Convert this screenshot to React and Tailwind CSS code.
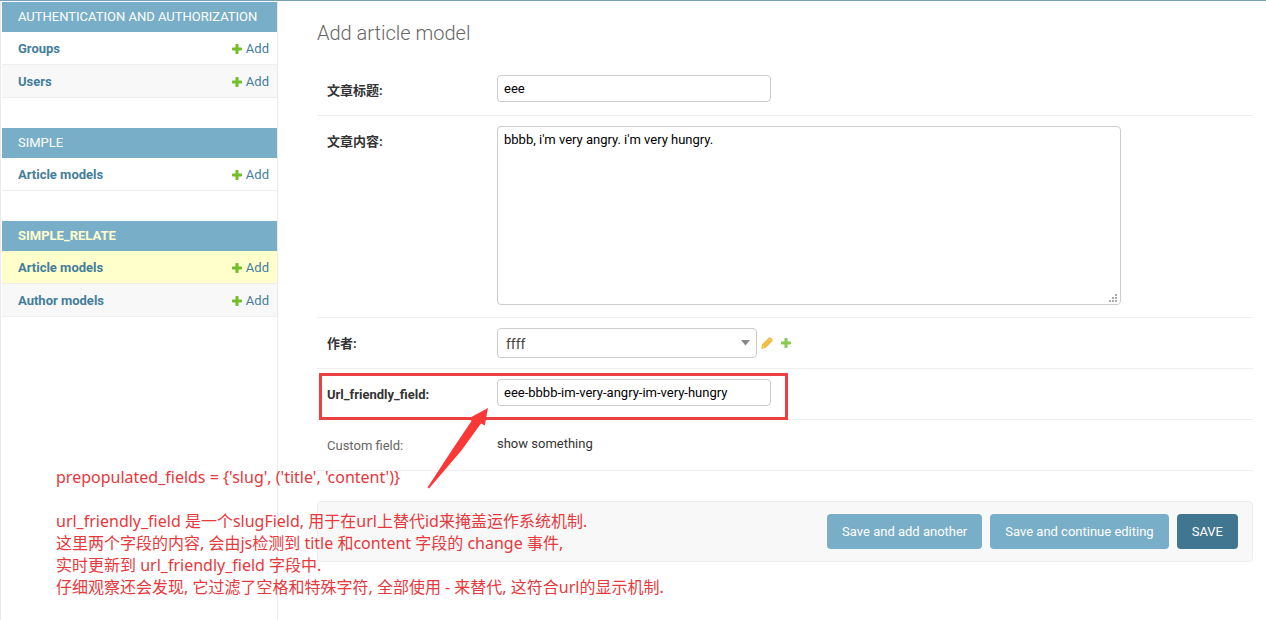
const apps = [
  {
    name: 'AUTHENTICATION AND AUTHORIZATION',
    models: ['Groups', 'Users'],
  },
  { name: 'SIMPLE', models: ['Article models'] },
  {
    name: 'SIMPLE_RELATE',
    current: true,
    models: ['Article models', 'Author models'],
  },
];

const notes = [
  "prepopulated_fields = {'slug', ('title', 'content')}",
  '',
  'url_friendly_field 是一个slugField, 用于在url上替代id来掩盖运作系统机制.',
  '这里两个字段的内容, 会由js检测到 title 和content 字段的 change 事件,',
  '实时更新到 url_friendly_field 字段中.',
  '仔细观察还会发现, 它过滤了空格和特殊字符, 全部使用 - 来替代, 这符合url的显示机制.',
];

function PlusIcon({ className }) {
  return (
    <svg viewBox="0 0 11 11" className={`size-[10px] shrink-0 ${className}`} aria-hidden="true">
      <path
        fill="currentColor"
        d="M4.600 0h1.800q.8 0 .8.800V3.800H10.200q.8 0 .8.800v1.800q0 .8-.8.800H7.200v3q0 .8-.8.800H4.600q-.8 0-.8-.8V7.200H.8Q0 7.200 0 6.400V4.600q0-.8.8-.8h3V.8q0-.8.8-.8z"
      />
    </svg>
  );
}

function PencilIcon() {
  return (
    <svg viewBox="0 0 12 12" className="size-3 shrink-0 text-[#f0bd45]" aria-hidden="true">
      <path
        fill="currentColor"
        fillRule="evenodd"
        d="M7.600 .8q1.200-1.100 2.300 0l1.300 1.300q1.100 1.100 0 2.300L4.700 10.900.9 11.800q-.9 0-.7-.9L1.100 7.300zM2.200 8.900l-.4 1.300 1.300-.4zM8.700 2.200l-.5.5 1.100 1.100.5-.5z"
      />
    </svg>
  );
}

function Sidebar() {
  return (
    <nav className="w-[278px] shrink-0 border-x border-[#eaeaea] pl-px pt-px" aria-label="Applications">
      {apps.map((app) => (
        <section key={app.name} className="mb-[30px]">
          <h2 className="bg-[#79aec8] px-4 text-[13px] leading-[30px]">
            <a
              href="#"
              className={app.current ? 'font-bold text-[#ffffcc]' : 'font-normal text-white'}
            >
              {app.name}
            </a>
          </h2>
          <ul>
            {app.models.map((model, i) => (
              <li
                key={model}
                className={`flex h-[33px] items-center justify-between border-b border-[#eee] pl-4 pr-2 pt-[2px] text-[13px] leading-[18px] text-[#447e9b] ${
                  app.current && i === 0 ? 'bg-[#ffffcc]' : i % 2 ? 'bg-[#f8f8f8]' : 'bg-white'
                }`}
              >
                <a href="#" className="font-bold">
                  {model}
                </a>
                <a href="#" className="flex items-center gap-1">
                  <PlusIcon className="text-[#70bf2b]" />
                  Add
                </a>
              </li>
            ))}
          </ul>
        </section>
      ))}
    </nav>
  );
}

function Row({ id, label, children, className = '' }) {
  return (
    <div className={`flex min-h-[51px] items-start border-b border-[#eee] p-[10px] ${className}`}>
      <label htmlFor={id} className="w-[170px] shrink-0 pt-2 font-bold leading-4">
        {label}
      </label>
      {children}
    </div>
  );
}

const field = 'block rounded border border-[#ccc] bg-white px-[6px] text-[13px] text-black outline-none';

export default function App() {
  return (
    <div className="relative flex min-h-screen flex-col overflow-x-hidden border-t border-[#79a0b8] bg-white font-['Roboto','Noto_Sans_CJK_SC',sans-serif] text-[13px] text-[#333]">
      <div className="flex flex-1">
        <Sidebar />
        <main className="min-w-0 flex-1 pb-5 pl-[39px] pr-[13px] pt-5">
          <h1 className="mb-5 text-xl font-light leading-6 text-[#666]">Add article model</h1>
          <form onSubmit={(e) => e.preventDefault()}>
            <Row id="title" label="文章标题:">
              <input id="title" defaultValue="eee" className={`${field} h-[27px] w-[274px]`} />
            </Row>
            <Row id="content" label="文章内容:">
              <div className="relative mb-[2px] w-full max-w-[624px]">
                <textarea
                  id="content"
                  defaultValue="bbbb, i'm very angry. i'm very hungry."
                  className={`${field} h-[179px] w-full resize-none py-[5px] leading-4`}
                />
                <svg viewBox="0 0 8 8" className="absolute bottom-[3px] right-1 size-2 text-[#aaa]" aria-hidden="true">
                  <path fill="currentColor" d="M0 6h2v2H0zM3 6h2v2H3zM6 6h2v2H6zM3 3h2v2H3zM6 3h2v2H6zM6 0h2v2H6z" />
                </svg>
              </div>
            </Row>
            <Row id="author" label="作者:">
              <div className="flex items-center">
                <div className="relative">
                  <select
                    id="author"
                    defaultValue="ffff"
                    className="block h-[30px] w-[260px] appearance-none rounded border border-[#ccc] bg-white px-2 pt-[2px] text-sm text-[#444] outline-none"
                  >
                    <option>ffff</option>
                  </select>
                  <svg viewBox="0 0 9 6" className="pointer-events-none absolute right-[7px] top-3 h-[6px] w-[9px]" aria-hidden="true">
                    <path fill="#888" d="M0 0h9L4.500 5.500z" />
                  </svg>
                </div>
                <button type="button" aria-label="Change author" className="ml-1">
                  <PencilIcon />
                </button>
                <button type="button" aria-label="Add author" className="ml-2">
                  <PlusIcon className="text-[#8bc951]" />
                </button>
              </div>
            </Row>
            <Row id="slug" label="Url_friendly_field:" className="relative">
              <input
                id="slug"
                defaultValue="eee-bbbb-im-very-angry-im-very-hungry"
                className={`${field} h-[27px] w-[274px]`}
              />
              <div className="pointer-events-none absolute left-[2px] top-1 h-[47px] w-[469px] border-[3px] border-[#ec3f42]" />
              <svg viewBox="0 0 64 84" className="pointer-events-none absolute left-[109px] top-[37px] z-10 h-[84px] w-16" aria-hidden="true">
                <path fill="#fa3838" d="M62 2 58.800 19.500 55 17.500 35 45 3 82.500 1.500 81.500 26 44 45.500 15 43.500 12z" />
              </svg>
            </Row>
            <div className="flex min-h-[51px] items-start border-b border-[#eee] p-[10px]">
              <span className="w-[170px] shrink-0 pt-2 leading-4 text-[#666]">Custom field:</span>
              <p className="pt-[6px] leading-4">show something</p>
            </div>
            <div className="mt-[30px] flex justify-end gap-2 rounded border border-[#eee] bg-[#f8f8f8] px-[14px] py-3 text-[13px] text-white">
              <button className="h-[35px] rounded bg-[#79aec8] px-[15px]">Save and add another</button>
              <button className="h-[35px] rounded bg-[#79aec8] px-[15px]">Save and continue editing</button>
              <button className="h-[35px] rounded bg-[#417690] px-[15px]">SAVE</button>
            </div>
          </form>
        </main>
      </div>
      <div className="pointer-events-none absolute left-14 top-[465px] whitespace-nowrap font-['Noto_Sans','Noto_Sans_CJK_SC',sans-serif] text-base leading-[22px] text-[#e5393d]">
        {notes.map((line, i) => (
          <p key={i} className="h-[22px]">
            {line}
          </p>
        ))}
      </div>
    </div>
  );
}
